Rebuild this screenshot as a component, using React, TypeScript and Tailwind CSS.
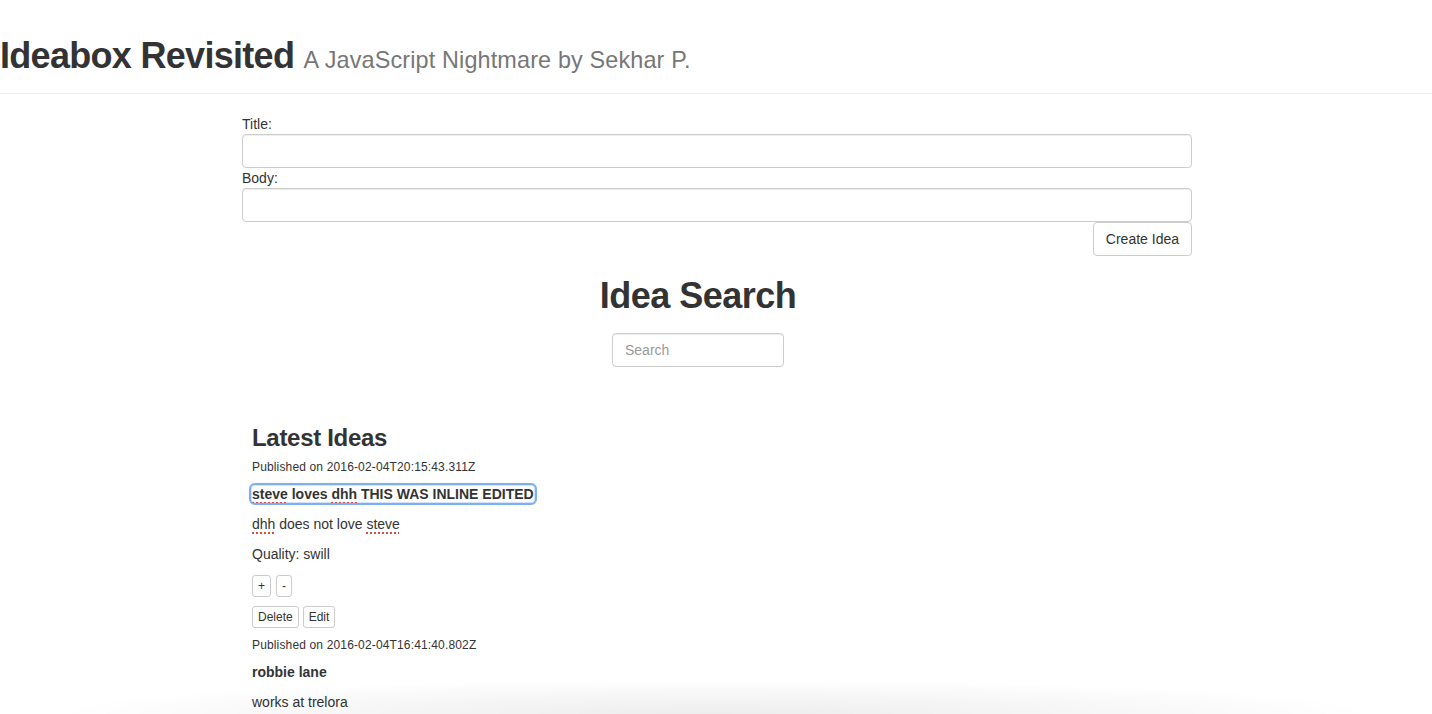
import React, { useState } from "react";

type Idea = {
  id: string;
  published: string;
  title: React.ReactNode;
  body: React.ReactNode;
  quality: string;
  focused?: boolean;
};

function Misspelled({ children }: { children: React.ReactNode }) {
  return (
    <span className="underline decoration-dotted decoration-[#e5483f] decoration-2 underline-offset-[3px]">
      {children}
    </span>
  );
}

export default function App() {
  const [title, setTitle] = useState("");
  const [body, setBody] = useState("");
  const [query, setQuery] = useState("");

  const ideas: Idea[] = [
    {
      id: "a",
      published: "2016-02-04T20:15:43.311Z",
      title: (
        <>
          <Misspelled>steve</Misspelled> loves <Misspelled>dhh</Misspelled> THIS WAS INLINE EDITED
        </>
      ),
      body: (
        <>
          <Misspelled>dhh</Misspelled> does not love <Misspelled>steve</Misspelled>
        </>
      ),
      quality: "swill",
      focused: true,
    },
    {
      id: "b",
      published: "2016-02-04T16:41:40.802Z",
      title: "robbie lane",
      body: "works at trelora",
      quality: "swill",
    },
  ];

  const btnXs =
    "h-[22px] px-[5px] rounded-[3px] border border-[#ccc] bg-white text-[12px] leading-[18px] text-[#333]";
  const input =
    "block h-[34px] px-3 rounded-[4px] border border-[#ccc] bg-white shadow-[inset_0_1px_1px_rgba(0,0,0,0.075)] outline-none";

  return (
    <div className="min-h-screen bg-white text-[#333] text-[14px] leading-[20px] font-['Liberation_Sans','Helvetica_Neue',Arial,sans-serif]">
      {/* page header */}
      <header className="pt-[36px] pb-[17px] border-b border-[#eee]">
        <h1 className="text-[36px] leading-[40px] font-bold tracking-[-0.7px] whitespace-nowrap">
          Ideabox Revisited{" "}
          <small className="text-[23.4px] leading-none font-normal text-[#777] tracking-[0.15px]">
            A JavaScript Nightmare by Sekhar P.
          </small>
        </h1>
      </header>

      <div className="w-[950px] mx-auto translate-x-[1px]">
        {/* new idea form */}
        <form className="mt-[20px]" onSubmit={(e) => e.preventDefault()}>
          <label className="block">Title:</label>
          <input
            value={title}
            onChange={(e) => setTitle(e.target.value)}
            className={input + " w-full"}
          />
          <label className="block">Body:</label>
          <input
            value={body}
            onChange={(e) => setBody(e.target.value)}
            className={input + " w-full"}
          />
          <div className="flex justify-end">
            <button className="h-[34px] px-3 rounded-[4px] border border-[#ccc] bg-white text-[14px]">
              Create Idea
            </button>
          </div>
        </form>

        {/* search */}
        <div className="pr-[38px]">
          <h1 className="mt-[20px] text-center text-[36px] leading-[40px] font-bold tracking-[-0.5px]">
            Idea Search
          </h1>
          <div className="mt-[17px] flex justify-center">
            <input
              value={query}
              onChange={(e) => setQuery(e.target.value)}
              placeholder="Search"
              className={input + " w-[172px] placeholder:text-[#999]"}
            />
          </div>
        </div>

        {/* ideas */}
        <div className="px-[10px] mt-[58px]">
          <h3 className="text-[24px] leading-[26px] font-bold tracking-[-0.3px] mb-[8px]">
            Latest Ideas
          </h3>
          {ideas.map((idea) => (
            <div key={idea.id}>
              <p className="text-[12px] leading-[17px] tracking-[0.15px] mb-[8px]">
                Published on {idea.published}
              </p>
              <div className="mb-[10px]">
                <span
                  className={
                    "font-bold " +
                    (idea.focused
                      ? "rounded-[3px] outline-2 outline-offset-[1px] outline-[#7fb0ee] shadow-[0_0_3px_2px_rgba(102,160,240,0.35)]"
                      : "")
                  }
                >
                  {idea.title}
                </span>
              </div>
              <p className="mb-[10px]">{idea.body}</p>
              <p className="mb-[11px]">Quality: {idea.quality}</p>
              <div className="flex gap-[5px] mb-[9px]">
                <button className={btnXs}>+</button>
                <button className={btnXs}>-</button>
              </div>
              <div className="flex gap-[4px] mb-[9px]">
                <button className={btnXs}>Delete</button>
                <button className={btnXs}>Edit</button>
              </div>
            </div>
          ))}
        </div>
      </div>

      {/* soft shadow from overlay at bottom edge */}
      <div className="fixed left-0 right-0 bottom-0 h-[40px] pointer-events-none bg-[radial-gradient(ellipse_660px_34px_at_50%_100%,rgba(0,0,0,0.07),rgba(0,0,0,0.03)_60%,transparent)]" />
    </div>
  );
}
